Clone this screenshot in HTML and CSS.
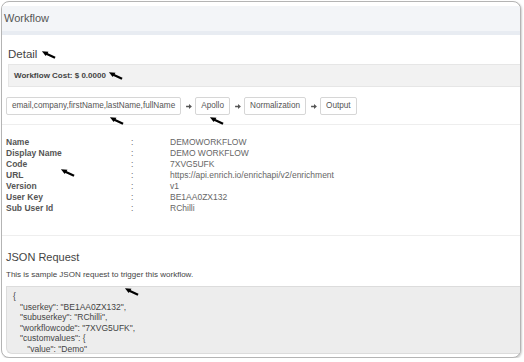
FILE: index.html
```html
<!DOCTYPE html>
<html lang="en">
<head>
    <meta charset="UTF-8">
    <title>Workflow</title>
    <link rel="stylesheet" href="styles.css">
</head>
<body>
    <div class="frame">
        <div class="head">Workflow</div>

        <div class="section">
            <h2 class="detail_title">Detail <svg class="mark" viewBox="0 0 16 9"><path d="M15 8 L4 3" stroke="#000" stroke-width="2.4"/><path d="M1 1 L8 1.5 L5 6 Z" fill="#000"/></svg></h2>
            <div class="cost">Workflow Cost: $ 0.0000 <svg class="mark" viewBox="0 0 16 9"><path d="M15 8 L4 3" stroke="#000" stroke-width="2.4"/><path d="M1 1 L8 1.5 L5 6 Z" fill="#000"/></svg></div>

            <div class="flow">
                <span class="step">email,company,firstName,lastName,fullName</span>
                <svg class="arrow" viewBox="0 0 7 6"><path d="M0 2h3.5V0L7 3 3.5 6V4H0z" fill="#555"/></svg>
                <span class="step">Apollo</span>
                <svg class="arrow" viewBox="0 0 7 6"><path d="M0 2h3.5V0L7 3 3.5 6V4H0z" fill="#555"/></svg>
                <span class="step">Normalization</span>
                <svg class="arrow" viewBox="0 0 7 6"><path d="M0 2h3.5V0L7 3 3.5 6V4H0z" fill="#555"/></svg>
                <span class="step">Output</span>
            </div>

            <svg class="mark mark_a" viewBox="0 0 16 9"><path d="M15 8 L4 3" stroke="#000" stroke-width="2.4"/><path d="M1 1 L8 1.5 L5 6 Z" fill="#000"/></svg>
            <svg class="mark mark_b" viewBox="0 0 16 9"><path d="M15 8 L4 3" stroke="#000" stroke-width="2.4"/><path d="M1 1 L8 1.5 L5 6 Z" fill="#000"/></svg>
        </div>

        <div class="info">
            <div class="row"><span class="key">Name</span><span class="colon">:</span><span class="val">DEMOWORKFLOW</span></div>
            <div class="row"><span class="key">Display Name</span><span class="colon">:</span><span class="val">DEMO WORKFLOW</span></div>
            <div class="row"><span class="key">Code</span><span class="colon">:</span><span class="val">7XVG5UFK</span></div>
            <div class="row"><span class="key">URL</span><span class="colon">:</span><span class="val">https://api.enrich.io/enrichapi/v2/enrichment</span></div>
            <div class="row"><span class="key">Version</span><span class="colon">:</span><span class="val">v1</span></div>
            <div class="row"><span class="key">User Key</span><span class="colon">:</span><span class="val">BE1AA0ZX132</span></div>
            <div class="row"><span class="key">Sub User Id</span><span class="colon">:</span><span class="val">RChilli</span></div>
            <svg class="mark mark_c" viewBox="0 0 16 9"><path d="M15 8 L4 3" stroke="#000" stroke-width="2.4"/><path d="M1 1 L8 1.5 L5 6 Z" fill="#000"/></svg>
        </div>

        <div class="json">
            <h2 class="json_title">JSON Request</h2>
            <p class="json_note">This is sample JSON request to trigger this workflow.</p>
            <svg class="mark mark_d" viewBox="0 0 16 9"><path d="M15 8 L4 3" stroke="#000" stroke-width="2.4"/><path d="M1 1 L8 1.5 L5 6 Z" fill="#000"/></svg>
            <pre class="code">{
   "userkey": "BE1AA0ZX132",
   "subuserkey": "RChilli",
   "workflowcode": "7XVG5UFK",
   "customvalues": {
      "value": "Demo"</pre>
        </div>
    </div>
</body>
</html>
```

FILE: styles.css
```css
body{
    margin: 0;
    background: #fff;
    font-family: "Liberation Sans", Arial, sans-serif;
    color: #444;
}

.frame{
    margin: 1px 3px 0 1px;
    height: 355px;
    border: 1px solid #b4b4b4;
    border-radius: 8px;
    overflow: hidden;
    box-shadow: 1px 1px 2px rgba(0,0,0,0.2);
    background: #fff;
}

.head{
    margin-top: 4px;
    height: 25px;
    line-height: 25px;
    padding-left: 2px;
    font-size: 11px;
    color: #555;
    background: #f3f5f8;
    border-bottom: 4px solid #e8ecf2;
}

.section{
    position: relative;
    padding: 12px 0 9px 4px;
    border-bottom: 1px solid #eee;
}

.mark{
    width: 15px;
    height: 9px;
    vertical-align: middle;
}

.detail_title{
    margin: 0 0 3px 2px;
    height: 14px;
    line-height: 14px;
    font-size: 11.5px;
    font-weight: normal;
    color: #444;
}

.cost{
    margin-left: 2px;
    height: 21px;
    line-height: 21px;
    padding-left: 5px;
    font-size: 8px;
    font-weight: bold;
    color: #444;
    background: #f2f2f2;
    border: 1px solid #e6e6e6;
    border-right: none;
}

.flow{
    margin-top: 10px;
    display: flex;
    align-items: center;
}

.step{
    height: 16px;
    line-height: 16px;
    padding: 0 5px;
    font-size: 8.2px;
    color: #555;
    border: 1px solid #d6d6d6;
    border-radius: 2px;
}

.arrow{
    width: 6px;
    height: 5px;
    margin: 0 3px 0 5px;
}

/* annotation arrows over the content */
.mark_a{
    position: absolute;
    left: 107px;
    top: 81px;
}

.mark_b{
    position: absolute;
    left: 207px;
    top: 81px;
}

.info{
    position: relative;
    padding: 12px 0 0 4px;
    height: 98px;
    border-bottom: 1px solid #eee;
}

.row{
    display: flex;
    height: 11px;
    line-height: 11px;
    font-size: 8.5px;
}

.key{
    width: 125px;
    font-weight: bold;
    color: #555;
}

.colon{
    width: 39px;
    color: #666;
}

.val{
    color: #666;
}

.mark_c{
    position: absolute;
    left: 58px;
    top: 43px;
}

.json{
    position: relative;
    padding: 15px 0 0 4px;
}

.json_title{
    margin: 0;
    height: 13px;
    line-height: 13px;
    font-size: 11px;
    font-weight: normal;
    color: #444;
}

.json_note{
    margin: 6px 0 7px;
    height: 9px;
    line-height: 9px;
    font-size: 8px;
    color: #444;
}

.mark_d{
    position: absolute;
    left: 122px;
    top: 51px;
}

.code{
    margin: 0;
    height: 62px;
    padding: 4px 0 0 6px;
    font-family: "Liberation Sans", Arial, sans-serif;
    font-size: 8.5px;
    line-height: 10.5px;
    color: #444;
    background: #ededed;
    border: 1px solid #dcdcdc;
    border-right: none;
    border-bottom-left-radius: 6px;
    white-space: pre;
}
```
